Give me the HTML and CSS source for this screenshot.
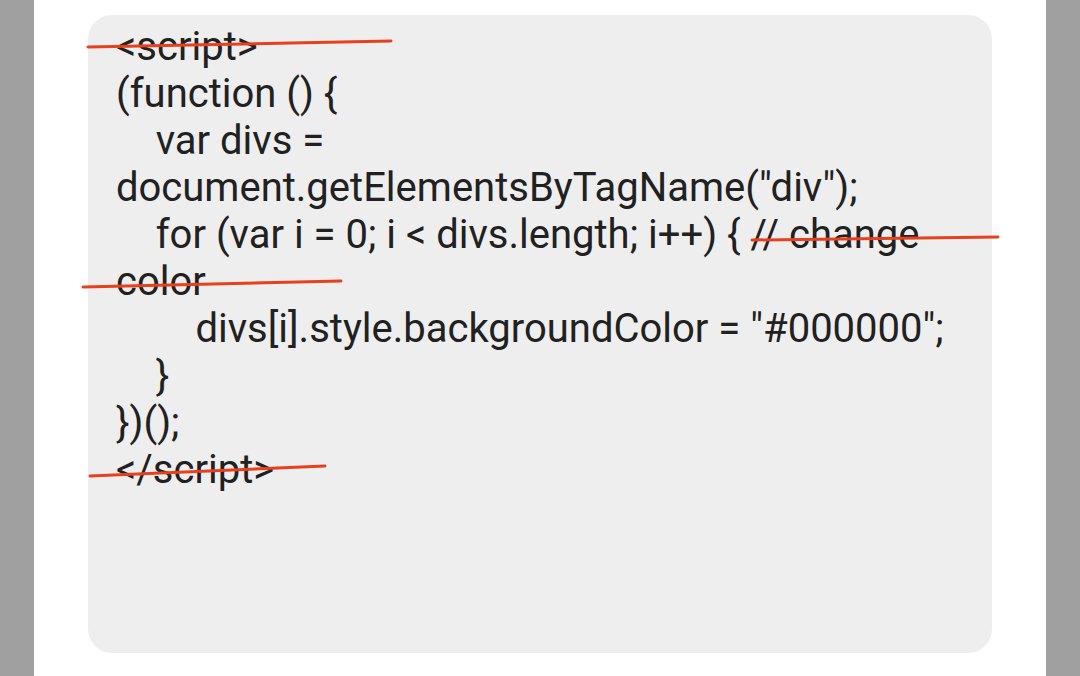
FILE: index.html
```html
<!DOCTYPE html>
<html>
<head>
<meta charset="utf-8">
<link rel="stylesheet" href="styles.css">
</head>
<body>
<div class="screen">
  <div class="page">
    <div class="codebox">
<pre class="code">&lt;script&gt;
(function () {
    var divs = document.getElementsByTagName("div");
    for (var i = 0; i &lt; divs.length; i++) { // change color
        divs[i].style.backgroundColor = "#000000";
    }
})();
&lt;/script&gt;</pre>
    </div>
  </div>
  <svg class="marks" width="1080" height="676" viewBox="0 0 1080 676">
    <g stroke="#e8401c" stroke-width="3" stroke-linecap="round" fill="none">
      <line x1="88" y1="47" x2="391" y2="41"/>
      <line x1="752" y1="240" x2="998" y2="237"/>
      <line x1="83" y1="287" x2="341" y2="281"/>
      <line x1="90" y1="476" x2="325" y2="466"/>
    </g>
  </svg>
</div>
</body>
</html>
```

FILE: styles.css
```css
html, body {
  margin: 0;
  padding: 0;
  background: #a0a0a0;
}
.screen {
  position: relative;
  width: 1080px;
  height: 676px;
  overflow: hidden;
  display: flex;
  justify-content: center;
}
.page {
  width: 1012px;
  background: #ffffff;
  padding: 15px 54px 0 54px;
  box-sizing: border-box;
}
.codebox {
  background: #eeeeee;
  border-radius: 24px;
  height: 638px;
  padding: 8px 28px 0 28px;
  box-sizing: border-box;
}
.code {
  margin: 0;
  font-family: Roboto, "Noto Sans", sans-serif;
  font-size: 40px;
  line-height: 47px;
  color: #212121;
  white-space: pre-wrap;
}
.marks {
  position: absolute;
  left: 0;
  top: 0;
  pointer-events: none;
}
```
